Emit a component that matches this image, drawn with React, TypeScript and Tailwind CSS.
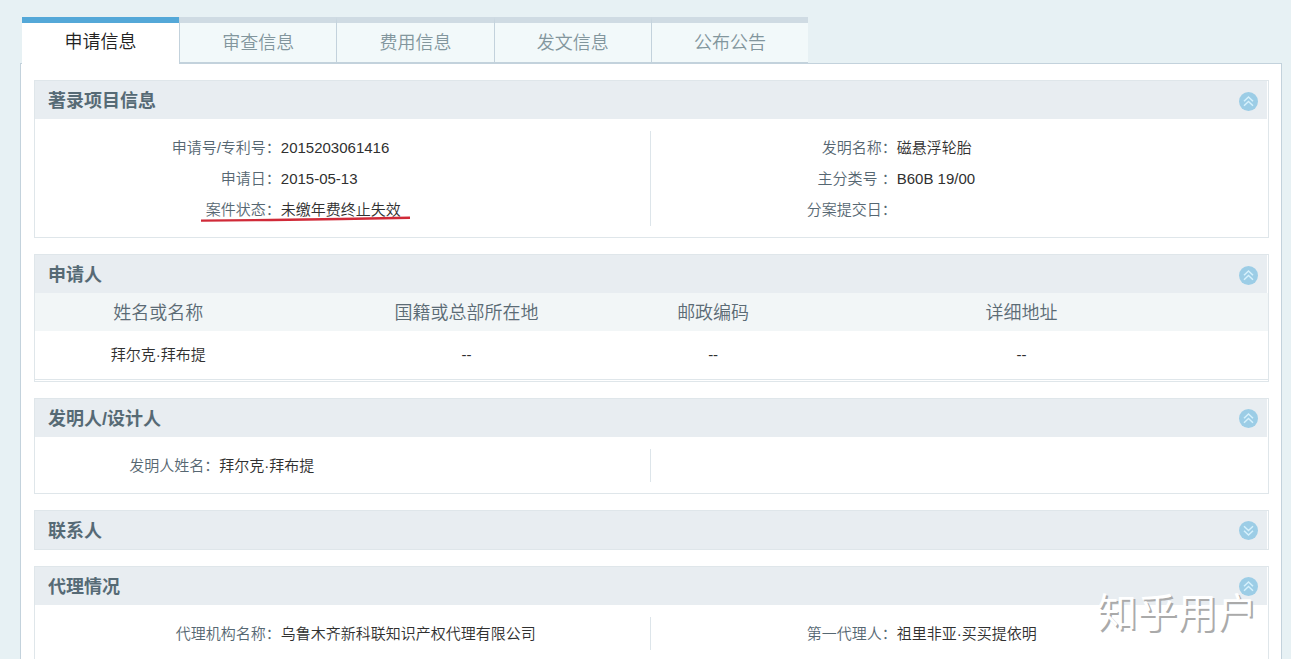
import { useState, type ReactNode } from "react";

const tabs = ["申请信息", "审查信息", "费用信息", "发文信息", "公布公告"];

type FieldProps = {
  label: string;
  value?: string;
  narrow?: boolean;
  marked?: boolean;
};

function Field({ label, value, narrow, marked }: FieldProps) {
  return (
    <div className="flex h-[31px] items-center text-[15px]">
      <dt className={`shrink-0 text-right text-[#566772] ${narrow ? "w-[30%]" : "w-[40%]"}`}>{label}</dt>
      <dd className="relative text-[#303030]">
        {value}
        {marked && (
          <svg
            className="absolute top-[17px] -left-20 h-1.5 w-[210px]"
            viewBox="0 0 210 6"
            fill="none"
            aria-hidden="true"
          >
            <path d="M0 4.6 L70 4 L140 3 L209 1.8" stroke="#d02a38" strokeWidth="2.4" />
          </svg>
        )}
      </dd>
    </div>
  );
}

function Columns({ left, right }: { left: ReactNode; right?: ReactNode }) {
  return (
    <div className="grid grid-cols-2 pt-3 pr-0.5 pb-[11px]">
      <dl className="border-r border-[#dde5ea] pt-0.5">{left}</dl>
      <dl className="pt-0.5">{right}</dl>
    </div>
  );
}

function Section({
  title,
  children,
  closed = false,
}: {
  title: string;
  children?: ReactNode;
  closed?: boolean;
}) {
  const [open, setOpen] = useState(!closed);
  return (
    <section className="border border-[#dfe6ea]">
      <div className="flex h-[38px] items-center justify-between border-r border-white bg-[#e8edf1] pt-0.5 pr-[9px] pl-[13px]">
        <h2 className="text-[18px] leading-6 font-bold text-[#566a75]">{title}</h2>
        <button
          type="button"
          aria-label={`${open ? "收起" : "展开"}${title}`}
          aria-expanded={open}
          onClick={() => setOpen(!open)}
          className="size-[19px] rounded-full bg-[#9ccde6]"
        >
          <svg viewBox="0 0 19 19" fill="none" stroke="#d6f1fc" strokeWidth="1.5" className={open ? "" : "rotate-180"}>
            <path d="M5 9.3 L9.5 5 L14 9.3 M5 13.8 L9.5 9.5 L14 13.8" />
          </svg>
        </button>
      </div>
      {open && children}
    </section>
  );
}

export default function App() {
  const [active, setActive] = useState(0);
  return (
    <div className="relative flex h-screen flex-col overflow-hidden bg-[#e7f1f4] pt-[17px] pr-[9px] pl-5 font-['Liberation_Sans','Noto_Sans_CJK_SC',sans-serif] font-[350]">
      <nav className="relative z-10 -mb-px ml-0.5 grid h-[47px] w-[786px] shrink-0 grid-cols-5">
        {tabs.map((tab, i) => (
          <button
            key={tab}
            type="button"
            onClick={() => setActive(i)}
            className={
              i === active
                ? "border-t-[6px] border-[#54a8d8] bg-white pb-0.5 text-[18px] text-[#222]"
                : "border-t-[6px] border-b-2 border-l border-t-[#cfdbe3] border-b-[#c3d2dc] border-l-[#c3d2dc] bg-[#f2f9fa] pt-0.5 text-[18px] text-[#82969d]"
            }
          >
            {tab}
          </button>
        ))}
      </nav>

      <main className="flex grow flex-col gap-4 border border-b-0 border-[#c3d2dc] bg-white px-3 pt-4 pl-[13px]">
        <Section title="著录项目信息">
          <Columns
            left={
              <>
                <Field label="申请号/专利号：" value="2015203061416" />
                <Field label="申请日：" value="2015-05-13" />
                <Field label="案件状态：" value="未缴年费终止失效" marked />
              </>
            }
            right={
              <>
                <Field label="发明名称：" value="磁悬浮轮胎" />
                <Field label="主分类号 ：" value="B60B 19/00" />
                <Field label="分案提交日：" />
              </>
            }
          />
        </Section>

        <Section title="申请人">
          <table className="mb-px w-full table-fixed border-b border-[#dfe6ea] text-center">
            <thead className="bg-[#f2f6f7] text-[18px] text-[#5b6b75]">
              <tr className="h-[38px]">
                <th className="w-[20%] pt-0.5 font-[350]">姓名或名称</th>
                <th className="w-[30%] pt-0.5 font-[350]">国籍或总部所在地</th>
                <th className="w-[10%] pt-0.5 font-[350]">邮政编码</th>
                <th className="w-[40%] pt-0.5 font-[350]">详细地址</th>
              </tr>
            </thead>
            <tbody className="text-[15px] text-[#303030]">
              <tr className="h-12">
                <td>拜尔克·拜布提</td>
                <td>--</td>
                <td>--</td>
                <td>--</td>
              </tr>
            </tbody>
          </table>
        </Section>

        <Section title="发明人/设计人">
          <Columns left={<Field label="发明人姓名：" value="拜尔克·拜布提" narrow />} />
        </Section>

        <Section title="联系人" closed />

        <Section title="代理情况">
          <Columns
            left={<Field label="代理机构名称：" value="乌鲁木齐新科联知识产权代理有限公司" />}
            right={<Field label="第一代理人：" value="祖里非亚·买买提依明" />}
          />
        </Section>
      </main>

      <p className="pointer-events-none absolute right-[34px] bottom-4 z-20 text-[40px] leading-[60px] font-normal text-white [text-shadow:2px_2px_0_#aaa]">
        知乎用户
      </p>
    </div>
  );
}
